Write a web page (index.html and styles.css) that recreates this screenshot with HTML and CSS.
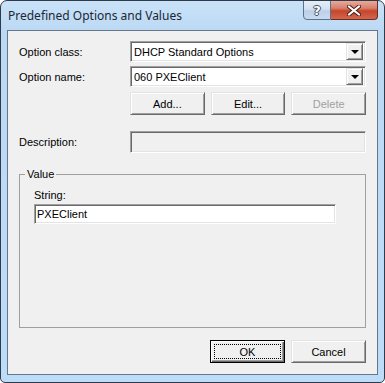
FILE: index.html
```html
<!DOCTYPE html>
<html lang="en">
<head>
    <meta charset="UTF-8">
    <title>Predefined Options and Values</title>
    <link rel="stylesheet" href="styles.css">
</head>
<body>
    <div class="window">
        <div class="titlebar">
            <span class="title">Predefined Options and Values</span>
            <div class="caption">
                <div class="cap-btn help">?</div>
                <div class="cap-btn close">
                    <svg width="14" height="11" viewBox="0 0 14 11">
                        <path d="M2 1.5 L12 9.5 M12 1.5 L2 9.5" stroke="#4a1a14" stroke-width="4" stroke-linecap="square"/>
                        <path d="M2 1.5 L12 9.5 M12 1.5 L2 9.5" stroke="#ffffff" stroke-width="2" stroke-linecap="square"/>
                    </svg>
                </div>
            </div>
        </div>
        <div class="client">
            <div class="row">
                <label class="field-label">Option class:</label>
                <div class="combo">
                    <span class="combo-text">DHCP Standard Options</span>
                    <span class="drop"><span class="arrow"></span></span>
                </div>
            </div>
            <div class="row">
                <label class="field-label">Option name:</label>
                <div class="combo">
                    <span class="combo-text">060 PXEClient</span>
                    <span class="drop"><span class="arrow"></span></span>
                </div>
            </div>
            <div class="action-row">
                <button class="btn">Add...</button>
                <button class="btn">Edit...</button>
                <button class="btn" disabled>Delete</button>
            </div>
            <div class="row desc-row">
                <label class="field-label">Description:</label>
                <div class="textbox disabled"></div>
            </div>
            <fieldset class="group">
                <legend>Value</legend>
                <label class="string-label">String:</label>
                <div class="textbox string-box">PXEClient</div>
            </fieldset>
            <div class="footer">
                <button class="btn default">OK</button>
                <button class="btn">Cancel</button>
            </div>
        </div>
    </div>
</body>
</html>
```

FILE: styles.css
```css
body {
    margin: 0;
    font-family: "Liberation Sans", Arial, sans-serif;
    font-size: 11px;
    color: #000;
    background: #fff;
}
.window {
    width: 385px;
    height: 383px;
    box-sizing: border-box;
    border: 1px solid #2e3b4b;
    border-radius: 7px 7px 5px 5px;
    padding: 0 6px 7px;
    background: linear-gradient(to bottom, #c9e2f8 0, #bcd9f4 30px, #bddcf7 100%);
    display: flex;
    flex-direction: column;
    overflow: hidden;
}
.titlebar {
    height: 29px;
    display: flex;
    align-items: flex-start;
}
.title {
    padding: 7px 0 0 1px;
    font-family: "Noto Sans", "Liberation Sans", sans-serif;
    font-size: 12px;
    line-height: 16px;
    color: #1b2735;
}
.caption {
    margin-left: auto;
    margin-top: -1px;
    display: flex;
}
.cap-btn {
    height: 20px;
    box-sizing: border-box;
    border: 1px solid #5d718a;
    display: flex;
    align-items: center;
    justify-content: center;
}
.help {
    width: 28px;
    border-radius: 0 0 0 4px;
    background: linear-gradient(to bottom, #e6eef8 0, #d3e1f1 45%, #bccfe6 55%, #c9dbef 100%);
    font-family: "DejaVu Sans", sans-serif;
    font-weight: bold;
    font-size: 13px;
    color: #fff;
    text-shadow: -1px 0 #3d4f66, 1px 0 #3d4f66, 0 -1px #3d4f66, 0 1px #3d4f66;
}
.close {
    width: 47px;
    border-left: none;
    border-color: #6b2b22;
    border-radius: 0 0 4px 0;
    background: linear-gradient(to bottom, #e8aa9c 0, #d8806b 40%, #c5452c 55%, #d2674c 100%);
}
.client {
    flex: 1;
    border: 1px solid #66778c;
    background: #f0f0f0;
    display: flex;
    flex-direction: column;
    padding: 10px 11px 11px;
    min-height: 0;
}
.row {
    display: flex;
    align-items: center;
    height: 21px;
}
.row + .row {
    margin-top: 4px;
}
.field-label {
    width: 111px;
    flex-shrink: 0;
}
.combo {
    width: 236px;
    height: 21px;
    box-sizing: border-box;
    border: 1px solid;
    border-color: #a0a0a0 #fff #fff #a0a0a0;
    box-shadow: inset 1px 1px #696969, inset -1px -1px #e3e3e3;
    background: #fff;
    display: flex;
    align-items: center;
    padding: 2px 2px 2px 3px;
}
.combo-text {
    flex: 1;
}
.drop {
    width: 17px;
    height: 17px;
    box-sizing: border-box;
    border: 1px solid;
    border-color: #e3e3e3 #696969 #696969 #e3e3e3;
    box-shadow: inset 1px 1px #fff, inset -1px -1px #a0a0a0;
    background: #f0f0f0;
    display: flex;
    align-items: center;
    justify-content: center;
}
.arrow {
    width: 0;
    height: 0;
    border-left: 4px solid transparent;
    border-right: 4px solid transparent;
    border-top: 4px solid #000;
    margin-top: 1px;
}
.action-row {
    display: flex;
    gap: 6px;
    margin-top: 5px;
    padding-left: 111px;
}
.btn {
    width: 75px;
    height: 23px;
    box-sizing: border-box;
    padding: 0;
    font-family: "Liberation Sans", Arial, sans-serif;
    font-size: 11px;
    color: #000;
    background: #f0f0f0;
    border: 1px solid;
    border-color: #e3e3e3 #696969 #696969 #e3e3e3;
    box-shadow: inset 1px 1px #fff, inset -1px -1px #a0a0a0;
}
.btn:disabled {
    color: #a0a0a0;
}
.btn.default {
    border-color: #000;
    box-shadow: inset 1px 1px #fff, inset -1px -1px #696969, inset -2px -2px #a0a0a0;
    outline: 1px dotted #000;
    outline-offset: -5px;
}
.desc-row {
    margin-top: 16px;
    height: 22px;
}
.textbox {
    width: 236px;
    height: 22px;
    box-sizing: border-box;
    border: 1px solid;
    border-color: #a0a0a0 #fff #fff #a0a0a0;
    box-shadow: inset 1px 1px #696969, inset -1px -1px #e3e3e3;
    background: #fff;
}
.textbox.disabled {
    background: #f0f0f0;
}
.group {
    flex: 1;
    min-height: 0;
    margin: 15px 0 0;
    padding: 0 0 0 14px;
    border: 1px solid #a0a0a0;
}
.group legend {
    margin-left: -9px;
    padding: 0 2px;
    line-height: 13px;
}
.string-label {
    display: block;
    margin-top: 8px;
    line-height: 13px;
}
.string-box {
    width: 302px;
    height: 20px;
    margin-top: 2px;
    padding: 2px 2px 0 2px;
    line-height: 15px;
}
.footer {
    display: flex;
    justify-content: flex-end;
    gap: 6px;
    margin-top: 12px;
}
```
